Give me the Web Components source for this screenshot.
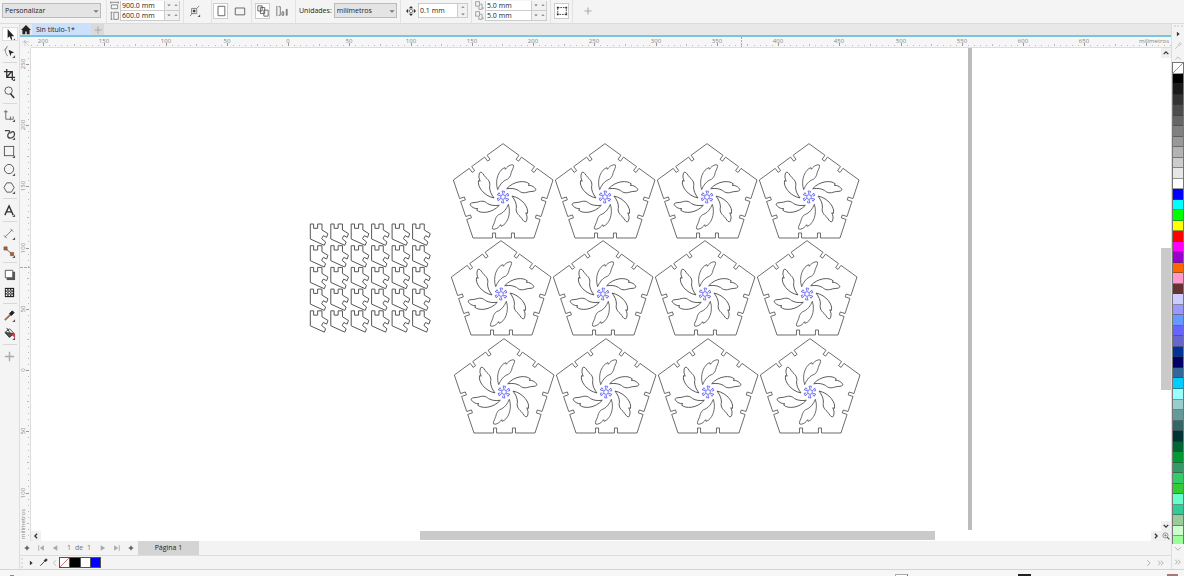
<!DOCTYPE html>
<html lang="es">
<head>
<meta charset="utf-8">
<title>Sin título-1*</title>
<style>
html,body{margin:0;height:100%;background:#fff}
body{font:7px/10px "Open Sans","Noto Sans",sans-serif;color:#222;overflow:hidden}
</style>
</head>
<body>
<draw-app></draw-app>
<script>
const define=(name,html,setup)=>{
  customElements.define(name,class extends HTMLElement{
    constructor(){
      super();
      const root=this.attachShadow({mode:'open'});
      if(html){
        const t=document.createElement('template');
        t.innerHTML=html;
        root.append(t.content.cloneNode(true));
      }
    }
    connectedCallback(){
      if(setup&&!this.ready){this.ready=true;setup(this,this.shadowRoot);}
    }
  });
};

const FLY='<path d="M13 11v3h-3z" fill="#555" stroke="none"/>';
const ICONS={
  pick:'<path d="M5 1v10l2-2 2 4 1-1-1-3h3z" fill="#222" stroke="none"/>'+FLY,
  shape:'<path d="M5 1Q0 6 5 12M1 6l3-3" stroke="#888"/><path d="M6 5l6 3-3 1-1 3z" fill="#222" stroke="none"/>'+FLY,
  crop:'<path d="M4 1v9h9M1 4h9v9M4 10l5-6" stroke-width="1.400"/>'+FLY,
  zoom:'<circle cx="6" cy="5" r="4" stroke="#555"/><path d="M8 8l4 5" stroke-width="1.600"/>',
  free:'<path d="M1 3h4M3 1v10h8M8 8v4M11 8v3" stroke="#666"/>'+FLY,
  art:'<path d="M2 4h4c2 0 1 2 0 3s-2 5 2 5 5-4 4-6-3-1-4 1" stroke="#444" stroke-width="1.400"/>'+FLY,
  rect:'<rect x="1.500" y="1.500" width="10" height="10" stroke="#555"/>'+FLY,
  ellipse:'<circle cx="6.500" cy="6.500" r="5" stroke="#555"/>'+FLY,
  polygon:'<path d="M4 2h5l3 5-3 5H4L1 7z" stroke="#555"/>'+FLY,
  text:'<path d="M2 12L6.500 2 11 12M3.500 8.500h6" stroke-width="1.500"/>'+FLY,
  line:'<path d="M2 11l8-8M1 9l3 3M8 2l3 3" stroke="#777"/>'+FLY,
  connect:'<path d="M3 4l7 6" stroke="#555"/><path d="M1 2h3.500v3.500H1zM8 8h3.500v3.500H8z" fill="#b05a30" stroke="#75503c" stroke-width=".6"/>'+FLY,
  shadow:'<path d="M4 4h9v9H4z" fill="#555" stroke="none"/><path d="M2.500 2.500h8v8h-8z" fill="#fff" stroke="#555"/>',
  trans:'<path d="M2 2h10v10H2z" fill="#222" stroke="none"/><path d="M3 4h8M3 7h8M3 10h8" stroke="#fff" stroke-width="1.600" stroke-dasharray="1.600 1.400"/><path d="M4.500 5.500h6M4.500 8.500h6" stroke="#ccc" stroke-width="1.200" stroke-dasharray="1.500 1.500"/>',
  dropper:'<path d="M2 12l6-6" stroke="#a86848" stroke-width="2"/><path d="M7 5l3-3 2 2-3 3z" fill="#222" stroke="#222"/>'+FLY,
  fill:'<path d="M2 6l5-4 5 5-5 4z" fill="#fff"/><path d="M3 6l8 1-4 4z" fill="#555"/><path d="M4 1l4 6" /><path d="M9 8l4-1v5l-2-2z" fill="#d43b42" stroke="none"/>'+FLY,
  plus:'<path d="M7 2v10M2 7h10" stroke="#aaa" stroke-width="1.500"/>',
  plusdark:'<path d="M7 3v8M3 7h8" stroke="#333" stroke-width="1.800"/>',
  home:'<path d="M7 0L0 7h2v6h4V9h2v4h4V7h2z" fill="#222" stroke="none"/>',
  width:'<path d="M1 2h12M1 1v3M13 1v3M2 6h10v6H2z" stroke="#555"/>',
  height:'<path d="M2 2v11M1 2h3M1 13h3M6 2h7v11H6z" stroke="#555"/>',
  scale:'<path d="M3 4h6v6H3zM1 13l3-3M9 4l3-3" stroke="#777"/><path d="M5 6h2v2H5z" fill="#333"/>'+FLY,
  portrait:'<path d="M3.500 1.500h8v11h-8z" stroke="#555"/>',
  landscape:'<path d="M1.500 3.500h11v8h-11z" stroke="#555"/>',
  pages:'<path d="M1 1h5v6H1zM4 3h5v7H4zM8 6h5v7H8z" stroke="#555" fill="#fff"/>',
  align:'<path d="M1 1v12M3 2h2v10H3M7 8h2v4H7zM12 5h1v7h-1z" stroke="#666"/>',
  nudge:'<path d="M7 0l3 3H4zM7 14l3-3H4zM0 7l3-3v6zM14 7l-3-3v6z" fill="#333" stroke="none"/><path d="M7 4l3 3-3 3-3-3z"/>',
  dup:'<path d="M1 1h6v7H1zM8 5h3v8H6v-4M11 11h3" stroke="#777"/>',
  bounds:'<path d="M2 3h10v8H2z" stroke-dasharray="2 1"/><path d="M1 2h2v2H1zM11 2h2v2h-2zM1 10h2v2H1zM11 10h2v2h-2z" fill="#333" stroke="none"/>',
  down:'<path d="M1 5h12l-6 6z" fill="#777" stroke="none"/>',
  up:'<path d="M1 10h12L7 4z" fill="#777" stroke="none"/>',
  play:'<path d="M5 3v8l5-4z" fill="#333" stroke="none"/>',
  first:'<path d="M3 2v10" stroke="#aaa" stroke-width="1.500"/><path d="M12 2v10L5 7z" fill="#aaa" stroke="none"/>',
  prev:'<path d="M11 2v10L3 7z" fill="#aaa" stroke="none"/>',
  next:'<path d="M3 2v10l8-5z" fill="#aaa" stroke="none"/>',
  last:'<path d="M11 2v10" stroke="#aaa" stroke-width="1.500"/><path d="M2 2v10l7-5z" fill="#aaa" stroke="none"/>',
  cup:'<path d="M3 9l4-4 4 4" stroke-width="2.200"/>',
  cdown:'<path d="M3 5l4 4 4-4" stroke-width="2.200"/>',
  cleft:'<path d="M9 3L5 7l4 4" stroke-width="2.200"/>',
  cright:'<path d="M5 3l4 4-4 4" stroke-width="2.200"/>',
  gup:'<path d="M2 10l5-5 5 5" stroke="#bbb" stroke-width="1.600"/>',
  gdown:'<path d="M2 4l5 5 5-5" stroke="#aaa" stroke-width="1.600"/>',
  gleft:'<path d="M9 2L4 7l5 5" stroke="#bbb" stroke-width="1.600"/>',
  gright:'<path d="M4 2l5 5-5 5" stroke="#aaa" stroke-width="1.600"/>',
  more:'<path d="M2 3l4 4-4 4M7 3l4 4-4 4" stroke="#aaa" stroke-width="1.600"/>',
  pipette:'<path d="M2 12l7-7" stroke="#444" stroke-width="1.500"/><path d="M8 4l3-3 2 2-3 3z" fill="#222"/>',
  gpipette:'<path d="M2 12l7-7M8 4l3-3 2 2-3 3z" stroke="#bbb" stroke-width="1.500"/>',
  find:'<circle cx="6" cy="6" r="4.500" stroke="#555"/><path d="M6 4v4M4 6h4" stroke="#555"/><path d="M9 9l4 4" stroke="#555" stroke-width="2"/>',
  origin:'<path d="M5 2v10M1 5h11M4 4l8 8" stroke="#999" stroke-dasharray="2 1"/>'
};

define('ui-icon',`<style>:host{display:block;flex:none;width:var(--s,10px);height:var(--s,10px)}svg{display:block;width:100%;height:100%}</style>`,(el,root)=>{
  root.innerHTML+=`<svg viewBox="0 0 14 14" fill="none" stroke="#333" aria-hidden="true">${ICONS[el.getAttribute('name')]}</svg>`;
});

const BUTTON='button{appearance:none;border:0;margin:0;padding:0;background:none;font:inherit;color:inherit;display:grid;place-items:center;min-width:0;min-height:0}';

define('bar-group',`<style>:host{display:flex;flex:none;box-sizing:border-box;align-items:center;border-right:1px solid #e2e2e2;height:23px;padding:0 3px 2px;gap:4px}</style><slot></slot>`);

define('drop-list',`<style>
:host{display:grid;height:15px}
select,ui-icon{grid-area:1/1}
select{appearance:none;box-sizing:border-box;width:100%;height:15px;margin:0;padding:0 2px;border:1px solid #bbb;border-radius:0;background:#e4e4e4;font:inherit;color:#222}
ui-icon{--s:6px;place-self:center end;margin-right:2px;pointer-events:none}
</style><select></select><ui-icon name="down"></ui-icon>`,(el,root)=>{
  const s=root.querySelector('select');
  s.setAttribute('aria-label',el.getAttribute('label'));
  s.add(new Option(el.getAttribute('value')));
});

define('number-field',`<style>${BUTTON}
:host{display:flex;box-sizing:border-box;min-width:0;height:10px;border:1px solid #ccc;border-top-width:0;background:#fff}
:host([stacked]){height:15px;border-top-width:1px}
input{appearance:none;flex:1;width:0;min-width:0;height:100%;box-sizing:border-box;border:0;margin:0;padding:0 0 0 1px;background:none;font:inherit;color:#222;outline:0}
div{display:grid;flex:none;grid-template-columns:1fr 1fr;width:14px;background:#f1f1f1;border-left:1px solid #ccc}
:host([stacked]) div{width:9px;grid-template-columns:1fr}
:host([stacked]) button:first-child{order:2}
ui-icon{--s:4px}
</style><input><div><button aria-label="Menos"><ui-icon name="down"></ui-icon></button><button aria-label="Más"><ui-icon name="up"></ui-icon></button></div>`,(el,root)=>{
  const i=root.querySelector('input');
  i.value=el.getAttribute('value');
  i.setAttribute('aria-label',el.getAttribute('label'));
});

define('property-bar',`<style>${BUTTON}
:host{display:flex;height:23px;background:#f4f4f4;border-bottom:1px solid #dcdcdc}
button{width:15px;height:16px}
button.on{box-sizing:border-box;background:#fff;border:1px solid #ccc}
button ui-icon{--s:12px}
.pair{display:grid;grid-template-columns:9px minmax(0,1fr);column-gap:1px;flex:1;min-width:0}
.pair ui-icon{--s:9px}
.preset{width:107px;padding-left:2px;padding-right:5px}.size{width:77px}.scale{width:28px}.orient{width:40px;padding-left:1px;padding-right:1px}
.pages{width:44px}.units{width:105px;gap:2px}.nudge{width:71px;gap:2px;padding-left:5px}.dup{width:79px}.bounds{width:22px}
drop-list,.nudge number-field{flex:1}
.add{border:0;width:30px;justify-content:center}
</style>
<bar-group class="preset"><drop-list label="Tamaño de página" value="Personalizar"></drop-list></bar-group>
<bar-group class="size"><div class="pair"><ui-icon name="width"></ui-icon><number-field label="Anchura" value="900.0 mm"></number-field><ui-icon name="height"></ui-icon><number-field label="Altura" value="600.0 mm"></number-field></div></bar-group>
<bar-group class="scale"><button aria-label="Escala"><ui-icon name="scale"></ui-icon></button></bar-group>
<bar-group class="orient"><button class="on" aria-label="Vertical"><ui-icon name="portrait"></ui-icon></button><button aria-label="Horizontal"><ui-icon name="landscape"></ui-icon></button></bar-group>
<bar-group class="pages"><button class="on" aria-label="Todas las páginas"><ui-icon name="pages"></ui-icon></button><button aria-label="Página actual"><ui-icon name="align"></ui-icon></button></bar-group>
<bar-group class="units"><span>Unidades:</span><drop-list label="Unidades" value="milímetros"></drop-list></bar-group>
<bar-group class="nudge"><ui-icon name="nudge"></ui-icon><number-field stacked label="Distancia de empuje" value="0.1 mm"></number-field></bar-group>
<bar-group class="dup"><div class="pair"><ui-icon name="dup"></ui-icon><number-field label="Duplicado X" value="5.0 mm"></number-field><ui-icon name="dup"></ui-icon><number-field label="Duplicado Y" value="5.0 mm"></number-field></div></bar-group>
<bar-group class="bounds"><button class="on" aria-label="Tratar como relleno"><ui-icon name="bounds"></ui-icon></button></bar-group>
<bar-group class="add"><button aria-label="Personalizar barra"><ui-icon name="plus" style="--s:10px"></ui-icon></button></bar-group>`);

define('tool-box',`<style>${BUTTON}
:host{display:flex;flex-direction:column;align-items:center;box-sizing:border-box;width:20px;background:#f4f4f4;border-right:1px solid #ddd}
button{width:16px;height:18px}
button.on{height:14px;margin:3px 0 1px;background:#fff;outline:1px solid #ddd;outline-offset:-1px}
ui-icon{--s:13px}
hr{width:14px;height:1px;margin:2px 0;border:0;background:#d8d8d8}
</style>`,(el,root)=>{
  'pick shape | crop zoom | free art rect ellipse polygon | text | line connect | shadow trans | dropper fill | plus'.split(' ').forEach(n=>{
    const e=document.createElement(n==='|'?'hr':'button');
    if(n!=='|'){
      e.innerHTML=`<ui-icon name="${n}"></ui-icon>`;
      e.setAttribute('aria-label',n);
      if(n==='pick')e.className='on';
    }
    root.append(e);
  });
});

define('doc-tabs',`<style>${BUTTON}
:host{display:flex;height:11px;background:#e8e8e8;border-bottom:2px solid #7cc4de}
button{height:11px}
.home{width:12px}.doc{width:59px;background:#cce0fc;justify-content:start;padding-left:4px}.new{width:13px;background:#dadada}
ui-icon{--s:10px}
</style><button class="home" aria-label="Inicio"><ui-icon name="home"></ui-icon></button><button class="doc">Sin título-1*</button><button class="new" aria-label="Nuevo documento"><ui-icon name="plus"></ui-icon></button>`);

const SCALE=1.225;
define('ruler-scale',`<style>:host{display:block;overflow:hidden;min-width:0;min-height:0;background:#f6f6f6}
:host([axis=x]){border-bottom:1px solid #ddd}:host([axis=y]){border-right:1px solid #ddd}
svg{display:block;width:100%;height:100%}text{font-size:6px;fill:#858585;text-anchor:middle}</style>`,(el,root)=>{
  const x=el.getAttribute('axis')==='x';
  const zero=x?257:322;
  let s='';
  for(let mm=x?-210:-265;mm<=(x?735:150);mm+=5){
    const p=Math.round(zero+mm*SCALE);
    const major=mm%50===0;
    const a=major?6:mm%25===0?7:8;
    const ink=major?'#999':'#bbb';
    s+=x?`<path d="M${p} ${a}V9" stroke="${ink}"/>`:`<path d="M${a} ${p}H9" stroke="${ink}"/>`;
    if(major&&(x?mm<700:mm<150)){
      const t=Math.abs(mm);
      s+=x?`<text x="${p}" y="6">${t}</text>`:`<text transform="translate(5 ${p}) rotate(-90)">${t}</text>`;
    }
  }
  s+=x?'<text x="1123" y="6">milímetros</text><path d="M710.500 0V10" stroke="#aaa" stroke-dasharray="2 1"/>'
      :'<text transform="translate(5 476) rotate(-90)">milímetros</text><path d="M0 219.500H10" stroke="#aaa" stroke-dasharray="3 1"/>';
  root.innerHTML+=`<svg shape-rendering="crispEdges">${s}</svg>`;
});

define('drawing-canvas',`<style>:host{display:block;background:#fff;min-width:0;min-height:0;overflow:hidden}svg{display:block;width:100%;height:100%}</style>`,(el,root)=>{
  // Pentagon panel in units of a third of a pixel, centred on the rosette.
  const v=[[0,-160],[150,-51],[93,123],[-90,123],[-149,-51]];
  let d='';
  v.forEach((a,i)=>{
    const b=v[(i+1)%5],dx=b[0]-a[0],dy=b[1]-a[1],l=Math.hypot(dx,dy);
    const nx=-dy/l*15,ny=dx/l*15;
    const pt=(t,k)=>`${(a[0]+dx*t+nx*k).toFixed(1)} ${(a[1]+dy*t+ny*k).toFixed(1)}`;
    d+=(i?'L':'M')+a.join(' ');
    [[.32,.37],[.63,.68]].forEach(([s,e])=>{d+=`L${pt(s,0)}L${pt(s,1)}L${pt(e,1)}L${pt(e,0)}`;});
  });
  d+='Z';
  let blades='',rose='';
  for(let i=0;i<6;i++){
    blades+=`<path transform="rotate(${i*60})" d="M-16-22C-26-52-11-84 6-88L7-83 11-88C14-93 27-99 31-96 34-90 28-84 25-74 22-60 18-54 6-50-4-44-10-36-16-22Z"/>`;
    rose+=`<path transform="rotate(${i*60})" d="M0-8L-3-18 5-17 3-11"/>`;
  }
  let s=`<defs><g id="panel" transform="scale(.3333)" fill="none" stroke-width="2.400"><g stroke="#484848"><path d="${d}"/>${blades}</g><g stroke="#4a4aee" stroke-width="2.200">${rose}<circle r="7"/></g></g>
  <path id="joint" transform="scale(.3333)" d="M0 0H10V13H22V0H35V18L53 29 49 40 39 35 34 44 46 54 42 64 0 45Z" fill="none" stroke="#555" stroke-width="3"/></defs>
  <rect x="937" width="4" height="482" fill="#bcbcbc"/>`;
  [[472,149],[470,246],[473,344]].forEach(([x,y])=>{
    for(let c=0;c<4;c++)s+=`<use href="#panel" x="${x+c*102}" y="${y}"/>`;
  });
  for(let r=0;r<5;r++)for(let c=0;c<6;c++)s+=`<use href="#joint" x="${(279.3+c*20.45).toFixed(1)}" y="${(176+r*21.7).toFixed(1)}"/>`;
  root.innerHTML+=`<svg role="img" aria-label="Dibujo">${s}</svg>`;
});

define('scroll-strip',`<style>${BUTTON}
:host{display:flex;background:#fff;min-width:0;min-height:0}
:host([axis=y]){flex-direction:column}
button{flex:0 0 10px;min-width:10px;min-height:10px;background:#f0f0f0}
ui-icon{--s:8px}
div{background:#cacaca}
:host([axis=x]) div{margin-bottom:1px}
</style>`,(el,root)=>{
  const x=el.getAttribute('axis')==='x';
  const [a,b,c]=x?[379,515,216]:[190,142,131];
  root.innerHTML+=`<button aria-label="Atrás"><ui-icon name="${x?'cleft':'cup'}"></ui-icon></button><span style="flex:${a}"></span><div style="flex:${b}"></div><span style="flex:${c}"></span><button aria-label="Adelante"><ui-icon name="${x?'cright':'cdown'}"></ui-icon></button>`;
});

define('work-area',`<style>${BUTTON}
:host{display:grid;flex:1;min-height:0;grid-template:11px minmax(0,1fr) 10px/11px minmax(0,1fr) 10px}
.corner{background:#f4f4f4;display:grid;place-items:center}
[axis=y].r{grid-row:2/4}
ruler-scale[axis=x]{grid-column:2/4}
button{background:#f0f0f0}ui-icon{--s:8px}
</style><div class="corner"><ui-icon name="origin"></ui-icon></div><ruler-scale axis="x"></ruler-scale>
<ruler-scale axis="y" class="r"></ruler-scale><drawing-canvas></drawing-canvas><scroll-strip axis="y"></scroll-strip>
<scroll-strip axis="x"></scroll-strip><button aria-label="Navegador"><ui-icon name="find"></ui-icon></button>`);

define('page-nav',`<style>${BUTTON}
:host{display:flex;align-items:center;box-sizing:border-box;height:15px;background:#f3f3f3;border-bottom:1px solid #ddd}
button{width:14px;height:14px}ui-icon{--s:8px}
p{display:flex;justify-content:space-between;width:24px;margin:0 5px;color:#777}
.tab{width:61px;background:#d4d4d4}
</style><button aria-label="Añadir página"><ui-icon name="plusdark"></ui-icon></button><button aria-label="Primera"><ui-icon name="first"></ui-icon></button><button aria-label="Anterior"><ui-icon name="prev"></ui-icon></button><p><span>1</span><span>de</span><span>1</span></p><button aria-label="Siguiente"><ui-icon name="next"></ui-icon></button><button aria-label="Última"><ui-icon name="last"></ui-icon></button><button aria-label="Añadir página al final"><ui-icon name="plusdark"></ui-icon></button><button class="tab">Página 1</button>`);

const NOCOLOR='linear-gradient(135deg,#fff 46%,#d77 47%,#d77 54%,#fff 55%)';

define('doc-palette',`<style>${BUTTON}
:host{display:flex;align-items:center;height:13px;background:#f4f4f4}
button{width:12px;height:11px}ui-icon{--s:8px}
.grip{width:4px;height:10px;border-left:2px dotted #ddd;margin-left:1px}
.slim{width:8px}.wide{width:16px}.wide ui-icon{--s:9px}
.colors{display:grid;grid-template-columns:repeat(4,1fr);width:42px;height:11px;border:1px solid #555;box-sizing:border-box;background:#555;gap:1px}
.colors button{width:auto;height:auto}
.end{margin-left:auto;display:flex;margin-right:4px}
</style><span class="grip"></span><button class="slim" aria-label="Menú"><ui-icon name="play"></ui-icon></button><button class="wide" aria-label="Cuentagotas"><ui-icon name="pipette"></ui-icon></button><button class="slim" aria-label="Anterior"><ui-icon name="gleft"></ui-icon></button>
<div class="colors"><button aria-label="Sin color" style="background:${NOCOLOR}"></button><button aria-label="Negro" style="background:#000"></button><button aria-label="Blanco" style="background:#fff"></button><button aria-label="Azul" style="background:#00f"></button></div>
<span class="end"><button aria-label="Siguiente"><ui-icon name="gright"></ui-icon></button><button aria-label="Más"><ui-icon name="more"></ui-icon></button></span>`);

define('color-palette',`<style>${BUTTON}
:host{display:flex;flex-direction:column;align-items:center;box-sizing:border-box;width:13px;background:#f4f4f4;border-left:1px solid #ddd}
button{width:12px}ui-icon{--s:8px}
.grip{width:9px;height:2px;border-top:2px dotted #ddd;margin-top:1px}
.menu,.down{height:10px}.pick{height:14px}.up{height:9px}.more{height:15px}
.colors{flex:1;min-height:0;width:12px;box-sizing:border-box;display:flex;flex-direction:column;border:1px solid #777;border-bottom:0}
.colors button{flex:1;width:auto;border-bottom:1px solid rgba(60,60,60,.5)}
.colors button:last-child{flex:.8;border:0}
</style><span class="grip"></span><button class="menu" aria-label="Menú"><ui-icon name="play"></ui-icon></button><button class="pick" aria-label="Cuentagotas"><ui-icon name="gpipette"></ui-icon></button><button class="up" aria-label="Arriba"><ui-icon name="gup"></ui-icon></button><div class="colors"></div><button class="down" aria-label="Abajo"><ui-icon name="gdown"></ui-icon></button><button class="more" aria-label="Más"><ui-icon name="more"></ui-icon></button>`,(el,root)=>{
  const box=root.querySelector('.colors');
  ('none 000000 1a1a1a 333333 4d4d4d 666666 808080 999999 b3b3b3 cccccc e6e6e6 ffffff 0000ff 00ffff 00ff00 ffff00 ff0000 ff00ff 9900cc ff6600 ff99cc 663333 '+
   'ccccff 9999ff 6699ff 6666ff 6666cc 003399 000066 336699 00ccff 99ffff 99cccc 669999 336666 003333 006633 009933 339966 33cc66 33cc33 66ffcc 33cc99 99cc99 ccffcc 99ff99').split(' ').forEach(c=>{
    const b=document.createElement('button');
    b.setAttribute('aria-label',c);
    b.style.background=c==='none'?NOCOLOR:'#'+c;
    box.append(b);
  });
});

define('status-bar',`<style>
:host{display:flex;align-items:flex-end;height:6px;border-top:1px solid #d4d4d4;background:#f6f6f6;overflow:hidden}
i{display:block;height:2px}
.a{width:4px;height:1px;background:#888;margin-left:10px}
.f{width:11px;height:1px;border:1px solid #aaa;border-right-color:#d44;border-bottom:0;background:#fff;margin-left:auto}
.o{width:13px;background:#222;margin-left:110px}
.p{width:11px;background:#a77;margin:0 6px 0 136px}
</style><i class="a"></i><i class="f"></i><i class="o"></i><i class="p"></i>`);

define('draw-app',`<style>
:host{display:flex;flex-direction:column;height:100vh;margin-right:4px}
main{display:flex;flex:1;min-height:0}
section{display:flex;flex-direction:column;flex:1;min-width:0}
</style><property-bar></property-bar><main><tool-box></tool-box><section><doc-tabs></doc-tabs><work-area></work-area><page-nav></page-nav><doc-palette></doc-palette></section><color-palette></color-palette></main><status-bar></status-bar>`);
</script>
</body>
</html>
